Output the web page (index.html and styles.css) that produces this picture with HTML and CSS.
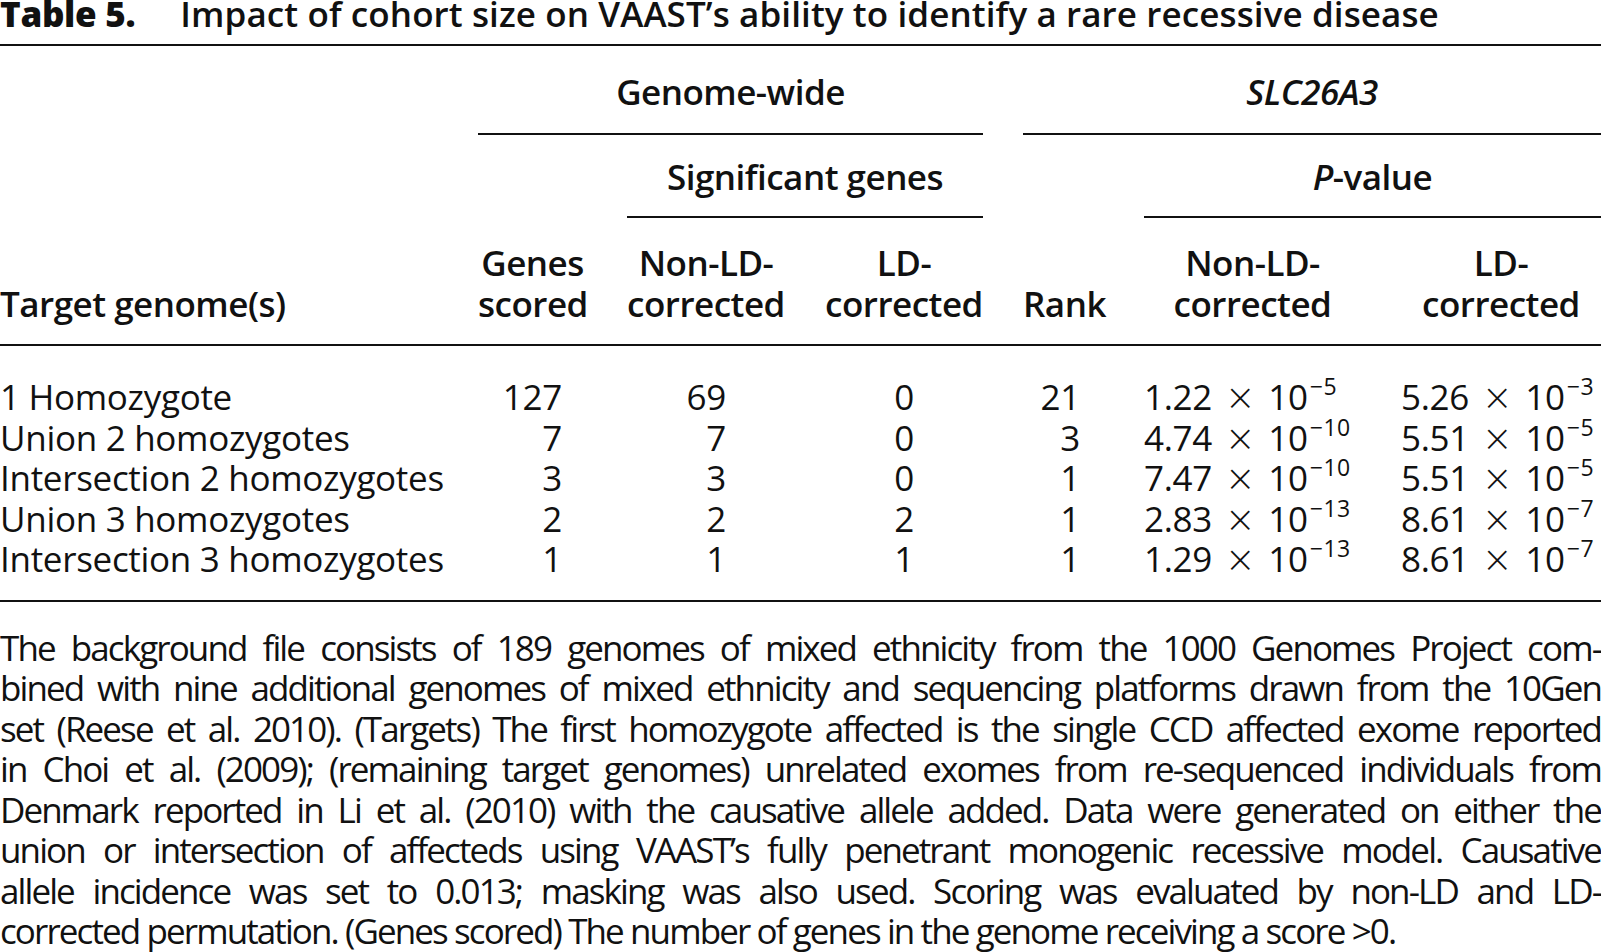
FILE: index.html
```html
<!DOCTYPE html>
<html lang="en">
<head>
<meta charset="utf-8">
<title>Table 5</title>
<link rel="stylesheet" href="styles.css">
</head>
<body>
<div class="page">
  <h1 class="caption"><span class="label">Table 5.</span><span class="title">Impact of cohort size on VAAST’s ability to identify a rare recessive disease</span></h1>

  <div class="thead">
    <div class="row r1">
      <div class="cell"></div>
      <div class="cell group g-genome">Genome-wide</div>
      <div class="cell group g-slc"><i>SLC26A3</i></div>
    </div>
    <div class="row r2">
      <div class="cell group g-sig">Significant genes</div>
      <div class="cell group g-p"><i>P</i>-value</div>
    </div>
    <div class="row r3">
      <div class="cell h left">Target genome(s)</div>
      <div class="cell h">Genes<br>scored</div>
      <div class="cell h">Non-LD-<br>corrected</div>
      <div class="cell h">LD-<br>corrected</div>
      <div class="cell h">Rank</div>
      <div class="cell h">Non-LD-<br>corrected</div>
      <div class="cell h">LD-<br>corrected</div>
    </div>
  </div>

  <div class="tbody">
    <div class="row d">
      <div class="cell">1 Homozygote</div>
      <div class="cell n c2">127</div>
      <div class="cell n c3">69</div>
      <div class="cell n c4">0</div>
      <div class="cell n c5">21</div>
      <div class="cell p">1.22 <span class="x">×</span> 10<sup>−5</sup></div>
      <div class="cell p">5.26 <span class="x">×</span> 10<sup>−3</sup></div>
    </div>
    <div class="row d">
      <div class="cell">Union 2 homozygotes</div>
      <div class="cell n c2">7</div>
      <div class="cell n c3">7</div>
      <div class="cell n c4">0</div>
      <div class="cell n c5">3</div>
      <div class="cell p">4.74 <span class="x">×</span> 10<sup>−10</sup></div>
      <div class="cell p">5.51 <span class="x">×</span> 10<sup>−5</sup></div>
    </div>
    <div class="row d">
      <div class="cell">Intersection 2 homozygotes</div>
      <div class="cell n c2">3</div>
      <div class="cell n c3">3</div>
      <div class="cell n c4">0</div>
      <div class="cell n c5">1</div>
      <div class="cell p">7.47 <span class="x">×</span> 10<sup>−10</sup></div>
      <div class="cell p">5.51 <span class="x">×</span> 10<sup>−5</sup></div>
    </div>
    <div class="row d">
      <div class="cell">Union 3 homozygotes</div>
      <div class="cell n c2">2</div>
      <div class="cell n c3">2</div>
      <div class="cell n c4">2</div>
      <div class="cell n c5">1</div>
      <div class="cell p">2.83 <span class="x">×</span> 10<sup>−13</sup></div>
      <div class="cell p">8.61 <span class="x">×</span> 10<sup>−7</sup></div>
    </div>
    <div class="row d">
      <div class="cell">Intersection 3 homozygotes</div>
      <div class="cell n c2">1</div>
      <div class="cell n c3">1</div>
      <div class="cell n c4">1</div>
      <div class="cell n c5">1</div>
      <div class="cell p">1.29 <span class="x">×</span> 10<sup>−13</sup></div>
      <div class="cell p">8.61 <span class="x">×</span> 10<sup>−7</sup></div>
    </div>
  </div>

  <p class="note">
    <span class="ln">The background file consists of 189 genomes of mixed ethnicity from the 1000 Genomes Project com-</span>
    <span class="ln">bined with nine additional genomes of mixed ethnicity and sequencing platforms drawn from the 10Gen</span>
    <span class="ln">set (Reese et al. 2010). (Targets) The first homozygote affected is the single CCD affected exome reported</span>
    <span class="ln">in Choi et al. (2009); (remaining target genomes) unrelated exomes from re-sequenced individuals from</span>
    <span class="ln">Denmark reported in Li et al. (2010) with the causative allele added. Data were generated on either the</span>
    <span class="ln">union or intersection of affecteds using VAAST’s fully penetrant monogenic recessive model. Causative</span>
    <span class="ln">allele incidence was set to 0.013; masking was also used. Scoring was evaluated by non-LD and LD-</span>
    <span class="ln last">corrected permutation. (Genes scored) The number of genes in the genome receiving a score &gt;0.</span>
  </p>
</div>
</body>
</html>
```

FILE: styles.css
```css
html, body {
  margin: 0;
  padding: 0;
  background: #fff;
}
body {
  overflow: hidden;
  color: #111;
  font-family: "Open Sans", "Noto Sans", sans-serif;
  font-size: 35px;
  line-height: 40.5px;
}
.page {
  width: 1601px;
}
.caption {
  margin: 0;
  font-size: 35px;
  line-height: 27px;
  font-weight: 600;
  padding: 0 0 17px;
  border-bottom: 2px solid #111;
  white-space: nowrap;
  letter-spacing: 0.1px;
}
.caption .label {
  font-weight: 800;
  letter-spacing: -0.3px;
  margin-right: 45px;
}
.row {
  display: grid;
  grid-template-columns: 438px 109px 158px 158px 81px 217px 200px;
  column-gap: 40px;
}
.thead {
  font-weight: 600;
  letter-spacing: -0.5px;
  border-bottom: 2px solid #111;
}
.group {
  text-align: center;
  border-bottom: 2px solid #111;
  white-space: nowrap;
}
.r1 .cell {
  padding: 26px 0 20px;
}
.r1 .cell:first-child {
  border: none;
}
.g-genome { grid-column: 2 / 5; }
.g-slc { grid-column: 5 / 8; }
.r2 .cell {
  padding: 22px 0 19px;
}
.g-sig { grid-column: 3 / 5; }
.g-p { grid-column: 6 / 8; }
.r3 {
  align-items: end;
  padding: 25px 0 20px;
}
.h {
  text-align: center;
  white-space: nowrap;
}
.h.left {
  text-align: left;
}
.tbody {
  padding: 31px 0 20px;
  border-bottom: 2px solid #111;
  letter-spacing: -0.3px;
}
.d {
  height: 40.5px;
}
.cell {
  white-space: nowrap;
}
.n {
  text-align: right;
}
.c2 { padding-right: 25px; }
.c3 { padding-right: 59px; }
.c4 { padding-right: 69px; }
.c5 { padding-right: 24px; }
.x {
  font-family: "DejaVu Sans", sans-serif;
  font-size: 37px;
  font-weight: 300;
  line-height: 0;
  margin: 0 4px;
}
sup {
  font-size: 23px;
  line-height: 0;
  vertical-align: 0;
  position: relative;
  top: -15px;
  margin-left: 2px;
  letter-spacing: 0.5px;
}
.note {
  margin: 0;
  padding-top: 26px;
  letter-spacing: -1.9px;
}
.ln {
  display: block;
  text-align: justify;
  text-align-last: justify;
  white-space: nowrap;
}
.ln.last {
  text-align: left;
  text-align-last: left;
}
```
